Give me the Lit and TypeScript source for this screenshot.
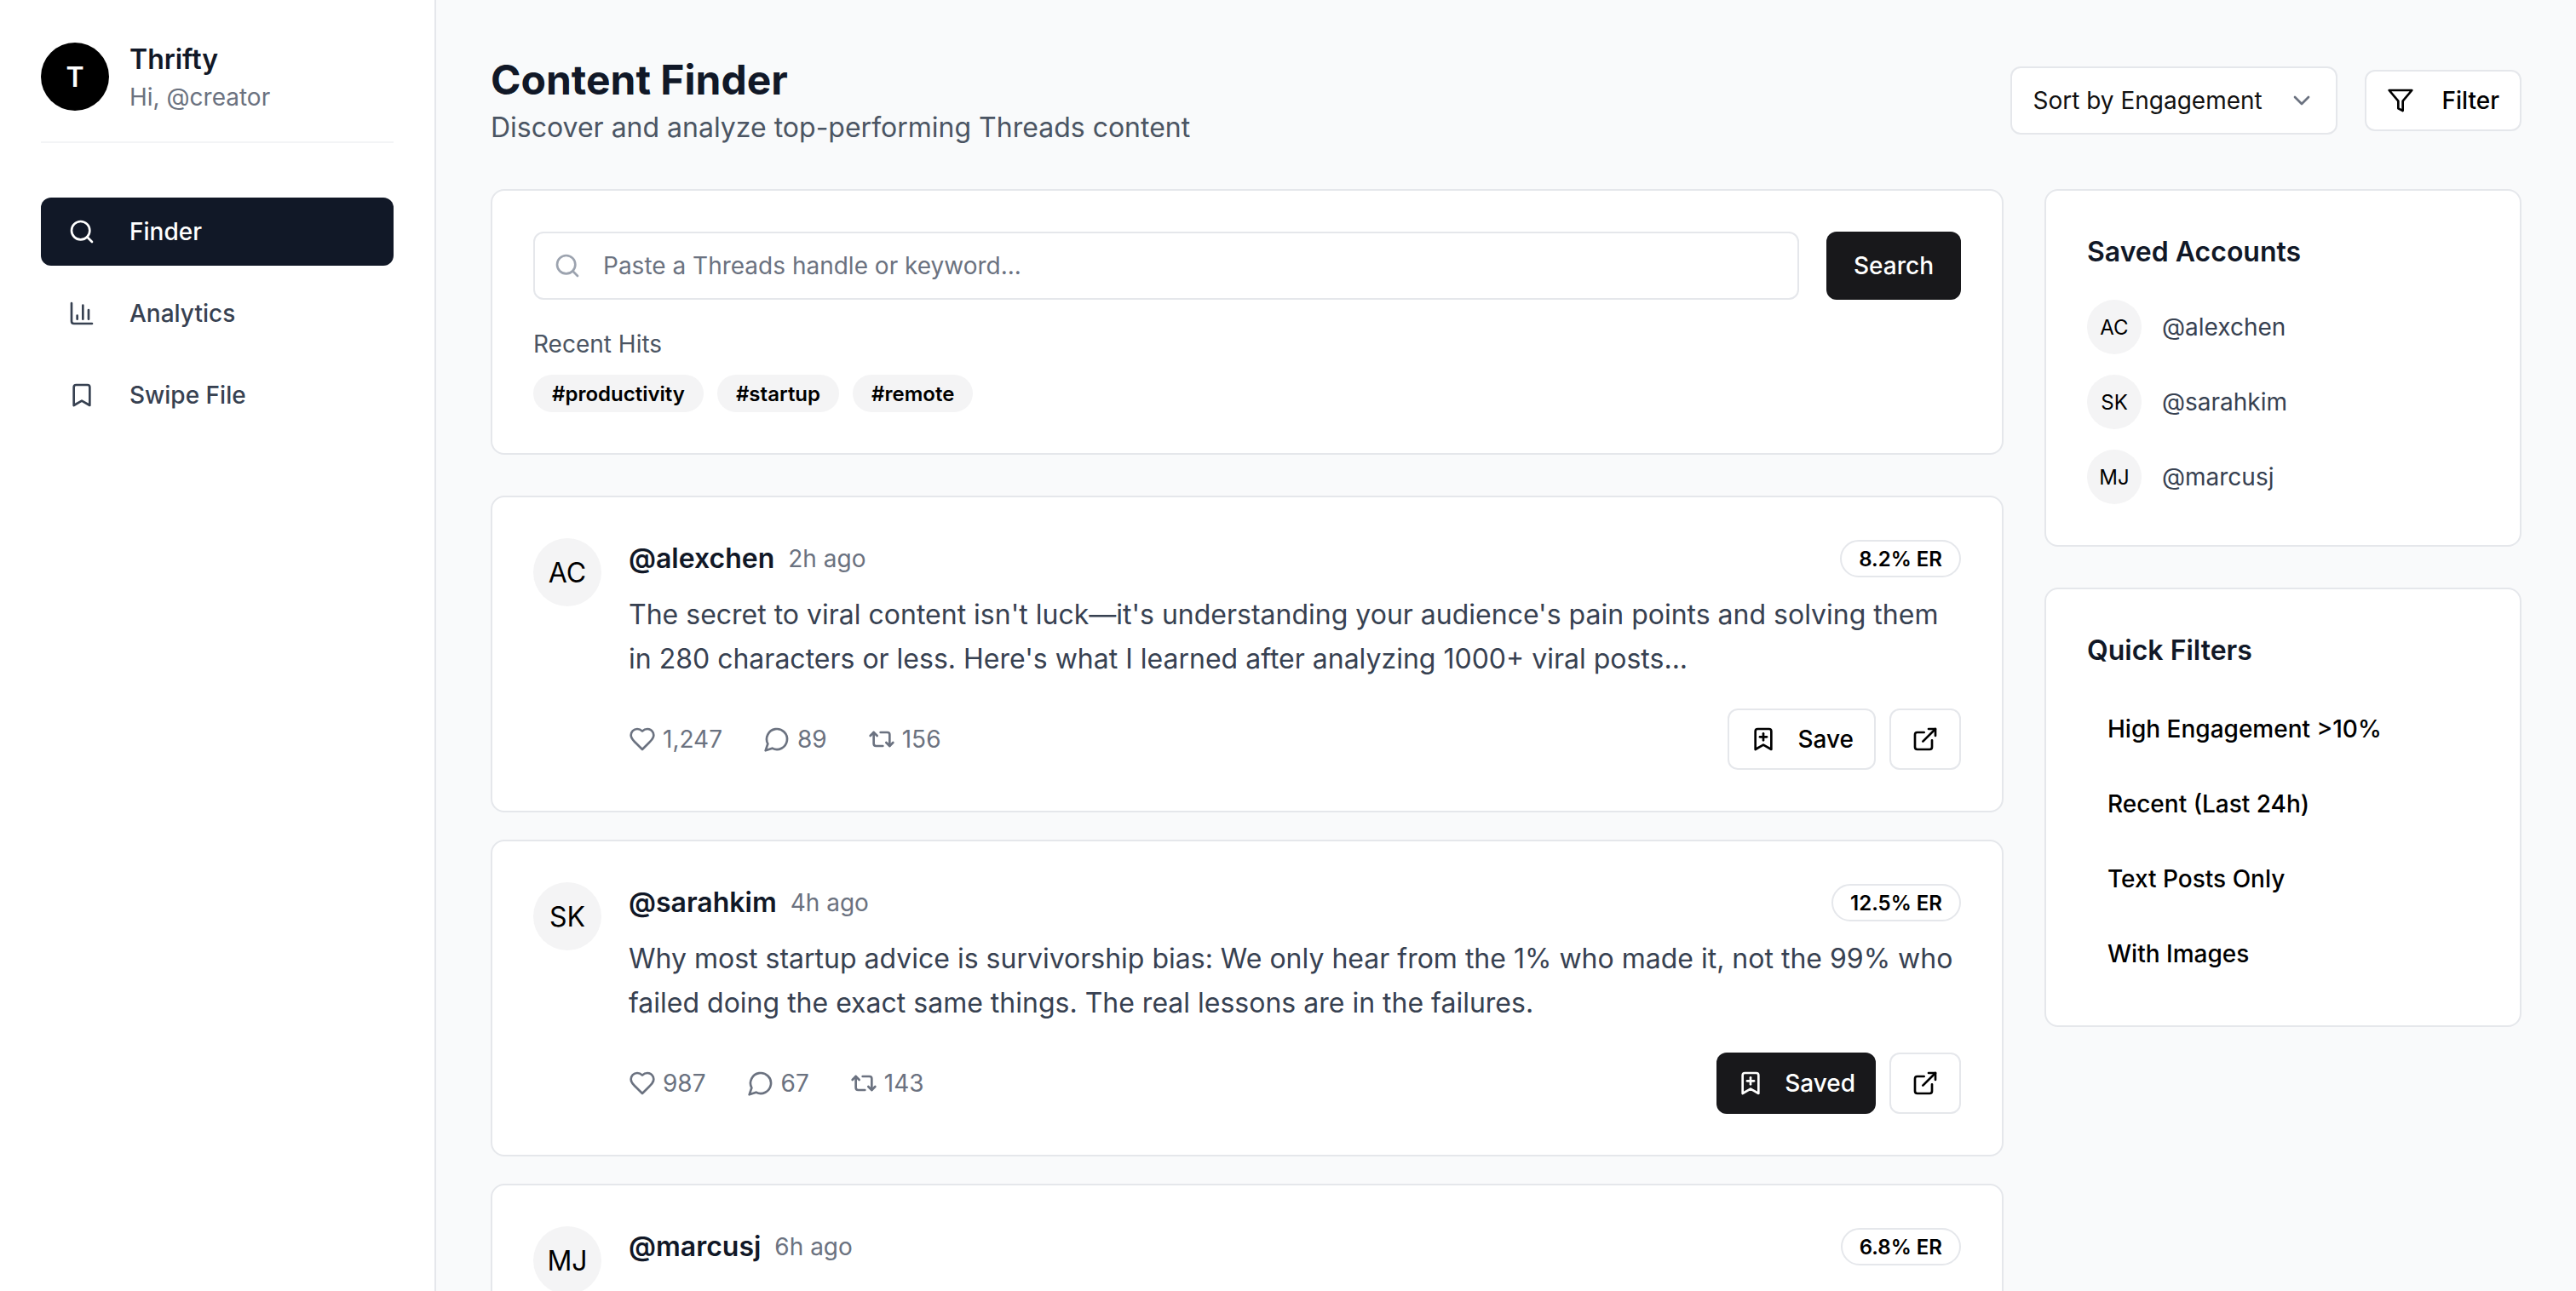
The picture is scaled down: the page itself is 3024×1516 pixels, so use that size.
import { LitElement, html, css, svg } from "lit";
import { customElement } from "lit/decorators.js";

const ICONS: Record<string, any> = {
  search: svg`<circle cx="11" cy="11" r="8"/><path d="m21 21-4.3-4.3"/>`,
  chart: svg`<path d="M3 3v16a2 2 0 0 0 2 2h16"/><path d="M18 17V9"/><path d="M13 17V5"/><path d="M8 17v-3"/>`,
  bookmark: svg`<path d="m19 21-7-4-7 4V5a2 2 0 0 1 2-2h10a2 2 0 0 1 2 2v16z"/>`,
  bookmarkPlus: svg`<path d="m19 21-7-4-7 4V5a2 2 0 0 1 2-2h10a2 2 0 0 1 2 2v16z"/><path d="M12 7v6"/><path d="M15 10H9"/>`,
  chevron: svg`<path d="m6 9 6 6 6-6"/>`,
  filter: svg`<polygon points="22 3 2 3 10 12.46 10 19 14 21 14 12.46 22 3"/>`,
  heart: svg`<path d="M19 14c1.49-1.46 3-3.21 3-5.5A5.5 5.5 0 0 0 16.5 3c-1.76 0-3 .5-4.5 2-1.5-1.5-2.74-2-4.5-2A5.5 5.5 0 0 0 2 8.5c0 2.3 1.5 4.05 3 5.5l7 7Z"/>`,
  message: svg`<path d="M7.9 20A9 9 0 1 0 4 16.1L2 22Z"/>`,
  repeat: svg`<path d="m2 9 3-3 3 3"/><path d="M13 18H7a2 2 0 0 1-2-2V6"/><path d="m22 15-3 3-3-3"/><path d="M11 6h6a2 2 0 0 1 2 2v10"/>`,
  external: svg`<path d="M15 3h6v6"/><path d="M10 14 21 3"/><path d="M18 13v6a2 2 0 0 1-2 2H5a2 2 0 0 1-2-2V8a2 2 0 0 1 2-2h6"/>`,
};

const icon = (name: string, cls = "") => html`<svg class="icon ${cls}" viewBox="0 0 24 24" fill="none" stroke="currentColor" stroke-width="2" stroke-linecap="round" stroke-linejoin="round">${ICONS[name]}</svg>`;

const POSTS = [
  { i: "AC", h: "@alexchen", t: "2h ago", er: "8.2% ER", body: "The secret to viral content isn't luck—it's understanding your audience's pain points and solving them in 280 characters or less. Here's what I learned after analyzing 1000+ viral posts...", likes: "1,247", comments: "89", shares: "156", saved: false },
  { i: "SK", h: "@sarahkim", t: "4h ago", er: "12.5% ER", body: "Why most startup advice is survivorship bias: We only hear from the 1% who made it, not the 99% who failed doing the exact same things. The real lessons are in the failures.", likes: "987", comments: "67", shares: "143", saved: true },
  { i: "MJ", h: "@marcusj", t: "6h ago", er: "6.8% ER", body: "", likes: "", comments: "", shares: "", saved: false },
];

@customElement("app-root")
export class AppRoot extends LitElement {
  static styles = css`
    :host { display: block; height: 100vh; overflow: hidden; font-family: Inter, "Noto Sans", sans-serif; background: #f9fafb; color: #111827; }
    * { box-sizing: border-box; }
    .icon { width: 32px; height: 32px; flex: none; display: block; }
    .layout { display: flex; height: 100vh; }

    .sidebar { width: 512px; flex: none; background: #fff; border-right: 2px solid #e5e7eb; padding: 46px 48px; }
    .user { display: flex; align-items: center; gap: 24px; padding-bottom: 32px; border-bottom: 2px solid #f3f4f6; }
    .logo { width: 80px; height: 80px; border-radius: 50%; background: #000; color: #fff; display: flex; align-items: center; justify-content: center; font-size: 32px; font-weight: 600; flex: none; }
    .user-name { font-size: 32px; line-height: 48px; font-weight: 600; color: #111827; }
    .user-sub { font-size: 28px; line-height: 40px; color: #6b7280; }
    .nav { display: flex; flex-direction: column; gap: 16px; margin-top: 64px; }
    .nav-item { height: 80px; display: flex; align-items: center; gap: 40px; padding: 0 32px; border-radius: 12px; font-size: 28px; font-weight: 500; color: #374151; }
    .nav-item.active { background: #111827; color: #fff; }

    .main { flex: 1; min-width: 0; padding: 62px 64px 0; overflow: hidden; }
    .head { display: flex; align-items: center; justify-content: space-between; margin-bottom: 48px; }
    h1 { margin: 0; font-size: 48px; line-height: 64px; font-weight: 700; color: #111827; }
    .subtitle { font-size: 32px; line-height: 48px; color: #4b5563; }
    .head-actions { display: flex; align-items: center; gap: 32px; }
    .select { width: 384px; height: 80px; background: #fff; border: 2px solid #e5e7eb; border-radius: 12px; padding: 0 24px; display: flex; align-items: center; justify-content: space-between; font-size: 28px; color: #111; }
    .select .icon { color: #6b7280; width: 32px; height: 32px; }
    .btn { height: 72px; display: inline-flex; align-items: center; background: #fff; border: 2px solid #e5e7eb; border-radius: 12px; padding: 0 24px; gap: 24px; font-size: 28px; font-weight: 500; color: #000; white-space: nowrap; }
    .btn.filter { gap: 32px; }
    .btn.dark { background: #18181b; border: 0; color: #fff; }
    .btn.square { padding: 0 24px; }

    .grid { display: grid; grid-template-columns: minmax(0, 1fr) 560px; gap: 48px; align-items: start; }
    .col { display: flex; flex-direction: column; }
    .card { background: #fff; border: 2px solid #e5e7eb; border-radius: 16px; padding: 48px; }
    .search-card { margin-bottom: 48px; }
    .search-row { display: flex; gap: 32px; }
    .field { flex: 1; height: 80px; display: flex; align-items: center; gap: 26px; padding-left: 22px; border: 2px solid #e5e7eb; border-radius: 12px; background: #fff; color: #9ca3af; }
    .field input { flex: 1; border: 0; outline: 0; background: transparent; font: inherit; font-size: 28px; color: #111827; padding: 0; min-width: 0; }
    .field input::placeholder { color: #6b7280; opacity: 1; }
    .search-btn { width: 158px; height: 80px; background: #18181b; color: #fff; border-radius: 12px; display: flex; align-items: center; justify-content: center; font-size: 28px; font-weight: 500; }
    .recent { margin-top: 32px; font-size: 28px; line-height: 40px; color: #4b5563; }
    .chips { display: flex; gap: 16px; margin-top: 16px; }
    .chip { height: 44px; padding: 0 22px; border-radius: 22px; background: #f4f4f5; font-size: 24px; font-weight: 600; color: #000; display: flex; align-items: center; }

    .posts { display: flex; flex-direction: column; gap: 32px; }
    .post { display: flex; gap: 32px; }
    .avatar { width: 80px; height: 80px; border-radius: 50%; background: #f4f4f5; display: flex; align-items: center; justify-content: center; font-size: 32px; color: #000; flex: none; }
    .post-body { flex: 1; min-width: 0; }
    .post-head { display: flex; align-items: center; height: 48px; }
    .handle { font-size: 32px; line-height: 48px; font-weight: 600; color: #111827; }
    .time { margin-left: 16px; font-size: 28px; color: #6b7280; }
    .badge { margin-left: auto; height: 44px; padding: 0 20px; border: 2px solid #e5e7eb; border-radius: 22px; background: #fff; font-size: 24px; font-weight: 600; color: #000; display: flex; align-items: center; }
    .text { margin: 16px 0 0; font-size: 32px; line-height: 52px; color: #374151; }
    .post-foot { display: flex; align-items: center; justify-content: space-between; margin-top: 32px; }
    .stats { display: flex; gap: 48px; font-size: 28px; color: #6b7280; }
    .stat { display: flex; align-items: center; gap: 8px; }
    .actions { display: flex; gap: 16px; }

    .side { display: flex; flex-direction: column; gap: 48px; }
    h3 { margin: 0 0 32px; font-size: 32px; line-height: 48px; font-weight: 600; color: #111827; }
    .accounts { display: flex; flex-direction: column; gap: 24px; }
    .account { display: flex; align-items: center; gap: 24px; font-size: 28px; color: #374151; }
    .account .avatar { width: 64px; height: 64px; font-size: 24px; }
    .filters { display: flex; flex-direction: column; gap: 16px; }
    .qf { height: 72px; display: flex; align-items: center; padding: 0 24px; font-size: 28px; font-weight: 500; color: #000; }
  `;

  private post(p: (typeof POSTS)[number]) {
    return html`<div class="card post">
      <div class="avatar">${p.i}</div>
      <div class="post-body">
        <div class="post-head">
          <span class="handle">${p.h}</span><span class="time">${p.t}</span>
          <span class="badge">${p.er}</span>
        </div>
        ${p.body ? html`<p class="text">${p.body}</p>
        <div class="post-foot">
          <div class="stats">
            <span class="stat">${icon("heart")}${p.likes}</span>
            <span class="stat">${icon("message")}${p.comments}</span>
            <span class="stat">${icon("repeat")}${p.shares}</span>
          </div>
          <div class="actions">
            <span class="btn ${p.saved ? "dark" : ""}">${icon("bookmarkPlus")}${p.saved ? "Saved" : "Save"}</span>
            <span class="btn square">${icon("external")}</span>
          </div>
        </div>` : ""}
      </div>
    </div>`;
  }

  render() {
    return html`<div class="layout">
      <aside class="sidebar">
        <div class="user">
          <div class="logo">T</div>
          <div><div class="user-name">Thrifty</div><div class="user-sub">Hi, @creator</div></div>
        </div>
        <nav class="nav">
          <div class="nav-item active">${icon("search")}Finder</div>
          <div class="nav-item">${icon("chart")}Analytics</div>
          <div class="nav-item">${icon("bookmark")}Swipe File</div>
        </nav>
      </aside>
      <main class="main">
        <header class="head">
          <div><h1>Content Finder</h1><div class="subtitle">Discover and analyze top-performing Threads content</div></div>
          <div class="head-actions">
            <div class="select">Sort by Engagement${icon("chevron")}</div>
            <span class="btn filter">${icon("filter")}Filter</span>
          </div>
        </header>
        <div class="grid">
          <div class="col">
            <section class="card search-card">
              <div class="search-row">
                <label class="field">${icon("search")}<input placeholder="Paste a Threads handle or keyword..." /></label>
                <div class="search-btn">Search</div>
              </div>
              <div class="recent">Recent Hits</div>
              <div class="chips"><span class="chip">#productivity</span><span class="chip">#startup</span><span class="chip">#remote</span></div>
            </section>
            <div class="posts">${POSTS.map((p) => this.post(p))}</div>
          </div>
          <div class="side">
            <section class="card">
              <h3>Saved Accounts</h3>
              <div class="accounts">
                <div class="account"><div class="avatar">AC</div>@alexchen</div>
                <div class="account"><div class="avatar">SK</div>@sarahkim</div>
                <div class="account"><div class="avatar">MJ</div>@marcusj</div>
              </div>
            </section>
            <section class="card">
              <h3>Quick Filters</h3>
              <div class="filters">
                <div class="qf">High Engagement &gt;10%</div>
                <div class="qf">Recent (Last 24h)</div>
                <div class="qf">Text Posts Only</div>
                <div class="qf">With Images</div>
              </div>
            </section>
          </div>
        </div>
      </main>
    </div>`;
  }
}
